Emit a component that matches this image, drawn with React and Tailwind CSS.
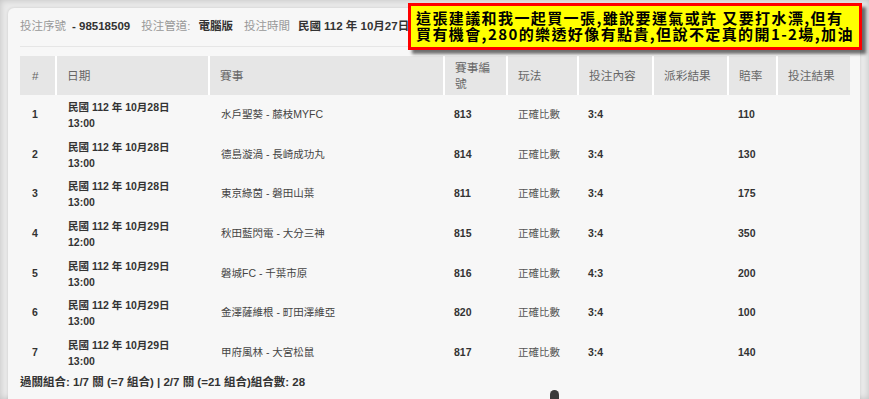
import React from 'react';

const FONT = { fontFamily: '"Liberation Sans", Arial, "Noto Sans CJK TC", sans-serif' };

const rows = [
  { no: 1, date: '民國 112 年 10月28日', time: '13:00', match: '水戶聖葵 - 藤枝MYFC', id: '813', bet: '3:4', odds: '110' },
  { no: 2, date: '民國 112 年 10月28日', time: '13:00', match: '德島漩渦 - 長崎成功丸', id: '814', bet: '3:4', odds: '130' },
  { no: 3, date: '民國 112 年 10月28日', time: '13:00', match: '東京綠茵 - 磐田山葉', id: '811', bet: '3:4', odds: '175' },
  { no: 4, date: '民國 112 年 10月29日', time: '12:00', match: '秋田藍閃電 - 大分三神', id: '815', bet: '3:4', odds: '350' },
  { no: 5, date: '民國 112 年 10月29日', time: '13:00', match: '磐城FC - 千葉市原', id: '816', bet: '4:3', odds: '200' },
  { no: 6, date: '民國 112 年 10月29日', time: '13:00', match: '金澤薩維根 - 町田澤維亞', id: '820', bet: '3:4', odds: '100' },
  { no: 7, date: '民國 112 年 10月29日', time: '13:00', match: '甲府風林 - 大宮松鼠', id: '817', bet: '3:4', odds: '140' },
];

const heads = ['#', '日期', '賽事', '賽事編號', '玩法', '投注內容', '派彩結果', '賠率', '投注結果'];

const cols = 'grid grid-cols-[35px_153px_235px_63px_71px_75px_75px_49px_74px]';

const App = () => {
  return (
    <div
      className="relative w-[869px] h-[399px] overflow-hidden bg-[#e9e9e9] pl-2 pt-2 pr-[9px] shadow-[inset_0_0_6px_rgba(0,0,0,0.18)]"
      style={FONT}
    >
      {/* Panel */}
      <div className="h-[400px] bg-[#f7f7f7] rounded-tl-md shadow-[0_0_3px_rgba(0,0,0,0.12)] px-3 pt-[11px]">
        {/* Ticket info */}
        <div className="flex items-center h-4 text-[11.5px] text-[#999]">
          <span>投注序號</span>
          <span className="font-bold text-[#333] ml-[6px]">- 98518509</span>
          <span className="ml-[11px]">投注管道:</span>
          <span className="font-bold text-[#333] ml-[8px]">電腦版</span>
          <span className="ml-[11px]">投注時間</span>
          <span className="font-bold text-[#333] ml-[8px]">民國 112 年 10月27日</span>
        </div>
        <div className="mt-[11px] border-t border-[#e6e6e6] w-[830px]" />

        {/* Table */}
        <div className="mt-[9px] w-[830px]">
          <div className={`${cols} h-[39px] bg-[#e6e6e6] text-[11.7px] text-[#666] leading-4`}>
            {heads.map((h, i) => (
              <div
                key={h}
                className={`flex items-center ${i === 0 ? 'pl-3' : 'border-l-2 border-white pl-[10px] pr-2'}`}
              >
                {h}
              </div>
            ))}
          </div>

          {rows.map((r) => (
            <div key={r.no} className={`${cols} h-[39.7px] text-[10.5px] text-[#333]`}>
              <div className="flex items-center pl-3 font-bold">{r.no}</div>
              <div className="flex flex-col justify-center pl-[13px] font-bold leading-4">
                <span>{r.date}</span>
                <span>{r.time}</span>
              </div>
              <div className="flex items-center pl-[13px] text-[#444]">{r.match}</div>
              <div className="flex items-center pl-[11px] font-bold">{r.id}</div>
              <div className="flex items-center pl-3 text-[#555]">正確比數</div>
              <div className="flex items-center pl-[11px] font-bold">{r.bet}</div>
              <div />
              <div className="flex items-center pl-[11px] font-bold">{r.odds}</div>
              <div />
            </div>
          ))}
        </div>

        <div className="mt-[1px] text-[11.5px] leading-4 font-bold text-[#333]">
          過關組合: 1/7 關 (=7 組合) | 2/7 關 (=21 組合)組合數: 28
        </div>
      </div>

      {/* Sticky note */}
      <div
        className="absolute left-[408px] top-[3px] w-[454px] h-[47px] bg-[#ffff00] border-[3px] border-[#ff0000] shadow-[4px_4px_3px_rgba(0,0,0,0.55)] pl-[5px] pt-[4px] text-[15px] leading-4 tracking-[1.4px] font-bold text-black whitespace-nowrap"
        style={{ fontFamily: '"Noto Sans CJK TC", "Liberation Sans", sans-serif' }}
      >
        <div>這張建議和我一起買一張,雖說要運氣或許 又要打水漂,但有</div>
        <div>買有機會,280的樂透好像有點貴,但說不定真的開1-2場,加油</div>
      </div>

      {/* cursor nub */}
      <div className="absolute left-[550px] top-[390px] w-[9px] h-[12px] rounded-t-full bg-[#3a3a3a]" />
    </div>
  );
};

export default App;
